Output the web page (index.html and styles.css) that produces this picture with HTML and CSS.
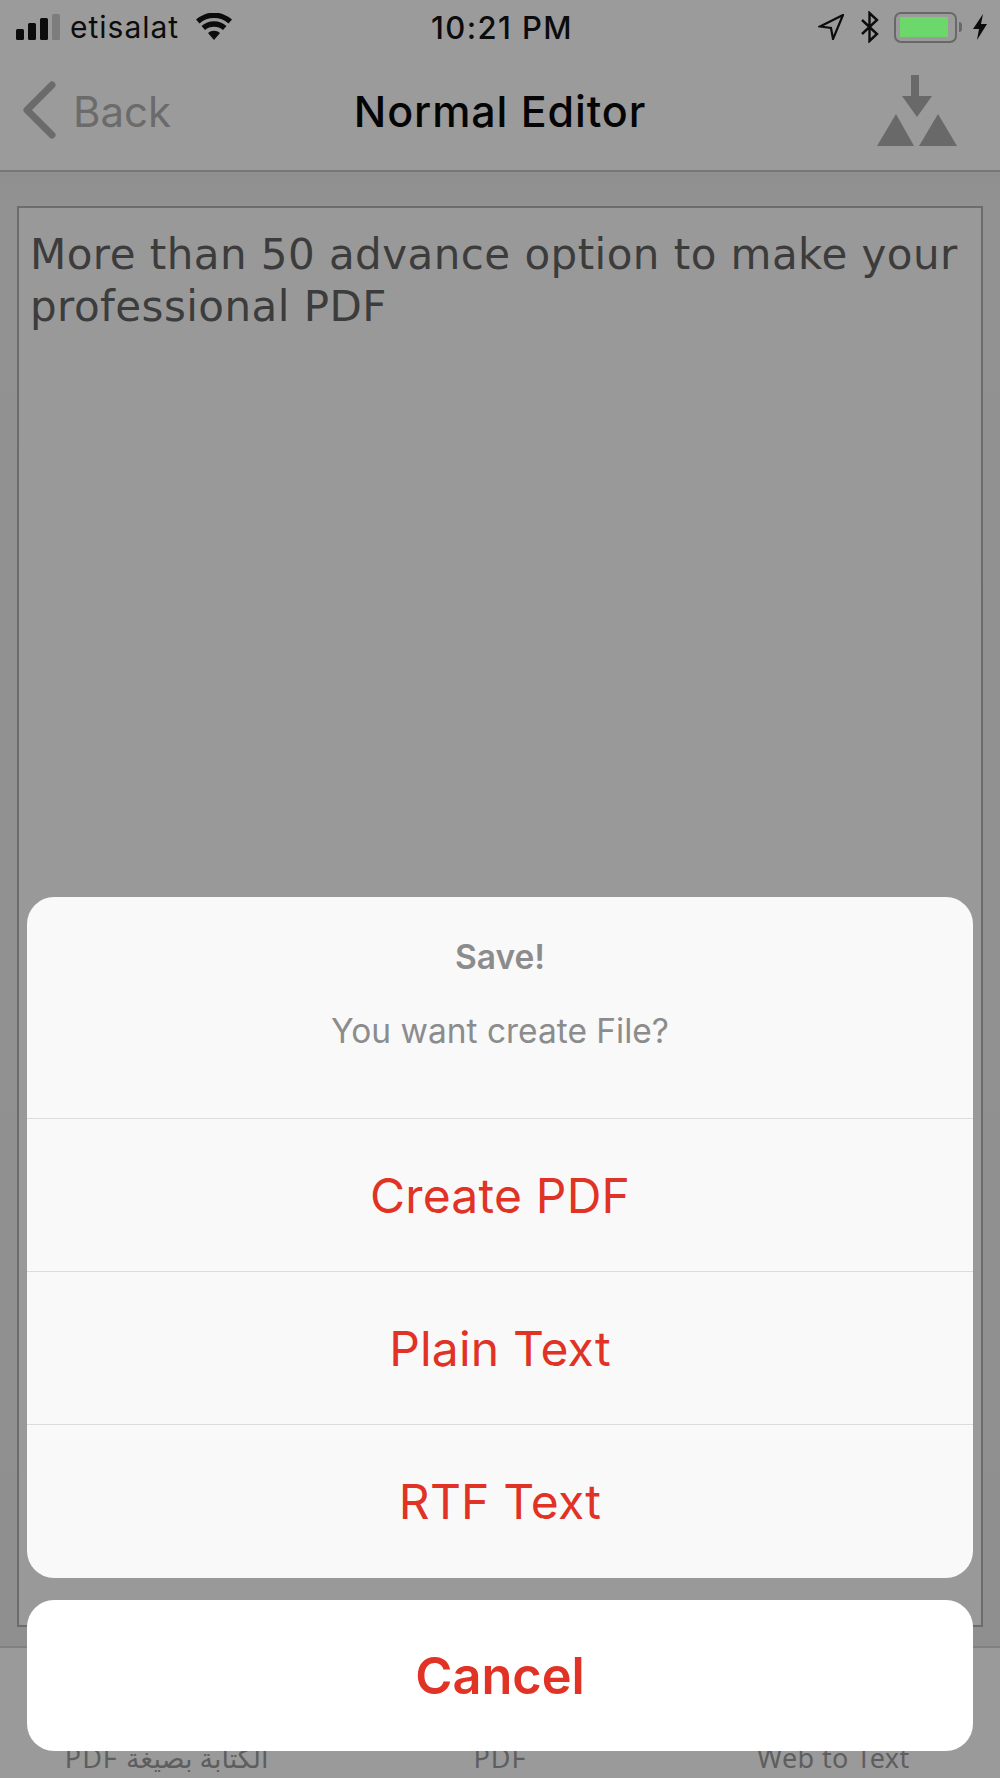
FILE: index.html
```html
<!DOCTYPE html>
<html lang="en">
<head>
<meta charset="utf-8">
<title>Normal Editor</title>
<link rel="stylesheet" href="styles.css">
</head>
<body>
<div class="phone">
  <header class="status">
    <div class="status-left">
      <div class="signal"><i class="b1"></i><i class="b2"></i><i class="b3"></i><i class="b4"></i></div>
      <span class="carrier">etisalat</span>
      <svg class="wifi" width="38" height="28" viewBox="0 0 38 28"><path d="M19 27l-6-7a9 9 0 0 1 12 0z" fill="#0c0c0c"/><path d="M10 17l-3.500-4a19 19 0 0 1 25 0L28 17a14 14 0 0 0-18 0z" fill="#0c0c0c"/><path d="M4.500 10.500L1 6.500a27 27 0 0 1 36 0l-3.500 4a22 22 0 0 0-29 0z" fill="#0c0c0c"/></svg>
    </div>
    <div class="time">10:21 PM</div>
    <div class="status-right">
      <svg width="26" height="26" viewBox="0 0 26 26"><path d="M25 1L2 12.500l11 1.500 2 11z" fill="none" stroke="#0c0c0c" stroke-width="2.200" stroke-linejoin="miter"/></svg>
      <svg class="bt" width="20" height="32" viewBox="0 0 20 32"><path d="M2 9l15 14-7.500 7V2L17 9 2 23" fill="none" stroke="#0c0c0c" stroke-width="2.400"/></svg>
      <div class="battery"><div class="battery-fill"></div></div>
      <div class="battery-cap"></div>
      <svg width="16" height="26" viewBox="0 0 16 26"><path d="M11 0L1 15h6L5 26 15 10H9z" fill="#0c0c0c"/></svg>
    </div>
  </header>
  <nav class="nav">
    <div class="back">
      <svg class="chevron" width="36" height="58" viewBox="0 0 36 58"><path d="M31 4L6 29l25 25" fill="none" stroke="#6b6b6b" stroke-width="7" stroke-linecap="round" stroke-linejoin="round"/></svg>
      <span>Back</span>
    </div>
    <h1 class="title">Normal Editor</h1>
    <svg class="save" width="80" height="72" viewBox="0 0 80 72"><path d="M34 0h8v21h13L40 42 25 21h9z" fill="#696969"/><path d="M0 71L19 39l18 32z" fill="#696969"/><path d="M42 71l19-32 19 32z" fill="#696969"/></svg>
  </nav>
  <main class="content">
    <div class="editor">More than 50 advance option to make your professional PDF</div>
  </main>
  <footer class="tabs">
    <span>PDF <span lang="ar">الكتابة بصيغة</span></span>
    <span>PDF</span>
    <span class="tab-web">Web to Text</span>
  </footer>
  <div class="sheet">
    <div class="group">
      <div class="sheet-head">
        <div class="sheet-title">Save!</div>
        <div class="sheet-msg">You want create File?</div>
      </div>
      <div class="action">Create PDF</div>
      <div class="action">Plain Text</div>
      <div class="action">RTF Text</div>
    </div>
    <div class="cancel">Cancel</div>
  </div>
</div>
</body>
</html>
```

FILE: styles.css
```css
* { box-sizing: border-box; }
html, body { margin: 0; padding: 0; }
body { width: 1000px; height: 1778px; overflow: hidden; background: #999; font-family: "Inter", "Liberation Sans", sans-serif; }
.phone { position: relative; width: 1000px; height: 1778px; display: flex; flex-direction: column; overflow: hidden; background: #989898; }

.status { height: 56px; flex: none; display: grid; grid-template-columns: 1fr auto 1fr; align-items: center; background: #9b9b9b; color: #0c0c0c; padding: 0 12px 2px 16px; }
.status-left { display: flex; align-items: center; gap: 10px; }
.signal { display: flex; align-items: flex-end; gap: 4px; height: 26px; }
.signal i { display: block; width: 8px; background: #0c0c0c; border-radius: 1.500px; }
.signal .b1 { height: 11px; }
.signal .b2 { height: 17px; }
.signal .b3 { height: 22px; }
.signal .b4 { height: 26px; background: #7d7d7d; }
.carrier { font-size: 30px; letter-spacing: 1px; margin-right: 6px; }
.time { font-size: 31px; font-weight: 500; letter-spacing: 1.400px; }
.status-right { display: flex; align-items: center; justify-content: flex-end; gap: 0; }
.bt { margin: 0 14px 0 16px; }
.battery { width: 63px; height: 31px; border: 2.500px solid #686868; border-radius: 7px; padding: 3.500px; }
.battery-fill { width: 48px; height: 100%; background: #6cd86b; }
.battery-cap { width: 3px; height: 10px; background: #686868; margin: 0 10px 0 2px; border-radius: 0 3px 3px 0; }

.nav { height: 116px; flex: none; display: grid; grid-template-columns: 1fr auto 1fr; align-items: center; background: #9b9b9b; border-bottom: 2px solid #777; padding: 0 23px 4px 21px; }
.back { display: flex; align-items: center; gap: 16px; color: #6b6b6b; font-size: 42px; }
.chevron { margin-top: -2px; }
.title { margin: 0 0 0 2px; font-size: 43px; font-weight: 500; letter-spacing: .9px; color: #050505; white-space: nowrap; }
.save { justify-self: end; margin: -1px 20px 0 0; }

.content { flex: 1; min-height: 0; padding: 34px 17px 19px; background: linear-gradient(#8f8f8f, #929292 34px, #8f8f8f); }
.editor { height: 100%; background: #999; border: 2px solid #6c6c6c; padding: 21px 11px; font-family: "DejaVu Sans", sans-serif; font-size: 42px; line-height: 52px; color: #3c3c3c; letter-spacing: .450px; }

.tabs { height: 132px; flex: none; display: grid; grid-template-columns: repeat(3, 1fr); align-items: end; justify-items: center; background: #9a9a9a; border-top: 2px solid #818181; color: #5e5e5e; font-size: 27px; letter-spacing: 1px; padding: 0 0 2px; text-align: center; font-family: "Noto Sans", "DejaVu Sans", sans-serif; }
.tab-web { letter-spacing: .400px; }

.sheet { position: absolute; left: 27px; top: 897px; width: 946px; display: flex; flex-direction: column; gap: 22px; }
.group { background: #f9f9f9; border-radius: 27px; overflow: hidden; }
.sheet-head { height: 221px; padding-top: 42px; text-align: center; }
.sheet-title { font-size: 33.500px; font-weight: 600; color: #8c8c8c; line-height: 36px; }
.sheet-msg { font-size: 33.500px; color: #8c8c8c; line-height: 36px; margin-top: 38px; }
.action { height: 153px; border-top: 1.500px solid #dcdcdc; display: flex; align-items: center; justify-content: center; font-size: 48px; letter-spacing: .200px; color: #e03325; }
.action:last-child { height: 154px; }
.cancel { height: 151px; background: #fff; border-radius: 27px; display: flex; align-items: center; justify-content: center; font-size: 50.500px; font-weight: 600; color: #e03325; }
```
